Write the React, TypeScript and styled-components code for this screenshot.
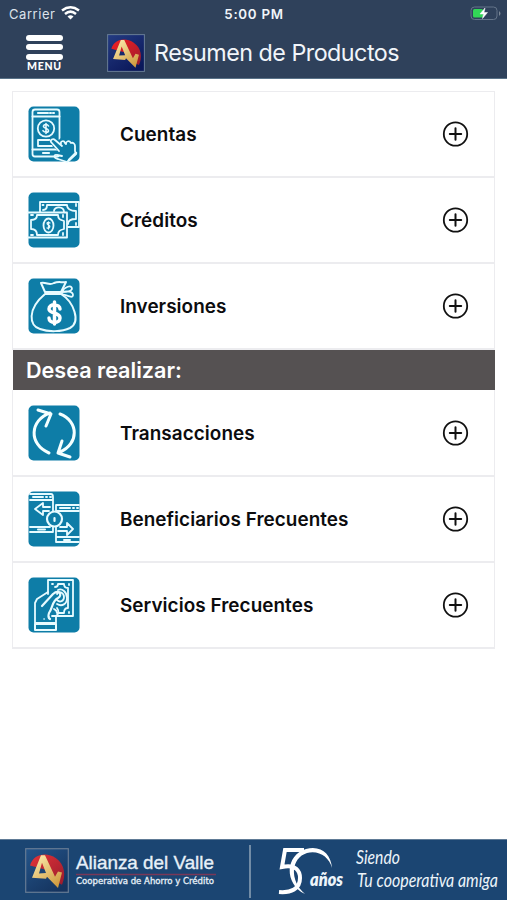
import React from "react";
import styled, { createGlobalStyle } from "styled-components";

const GlobalStyle = createGlobalStyle`
  * { box-sizing: border-box; }
  body { margin: 0; background: #fff; font-family: Inter, "Liberation Sans", sans-serif; }
  svg { display: block; flex: none; overflow: visible; }
`;

const Screen = styled.div`
  width: 507px;
  height: 900px;
  display: flex;
  flex-direction: column;
  background: #fff;
  overflow: hidden;
`;

const Header = styled.header`
  height: 79px;
  flex: none;
  background: #2f415b;
  border-bottom: 1px solid #597288;
  color: #f1f5fa;
`;

const StatusBar = styled.div`
  height: 27px;
  display: grid;
  grid-template-columns: 1fr auto 1fr;
  align-items: center;
  padding: 0 6px 0 7px;
`;

const Carrier = styled.div`
  display: flex;
  align-items: center;
  gap: 6px;
  padding-left: 2px;
  font-size: 13px;
  letter-spacing: 0.55px;
  color: #dce3eb;
`;

const Clock = styled.div`
  font-size: 13.3px;
  font-weight: 600;
  letter-spacing: 0.72px;
`;

const BatterySlot = styled.div`
  display: flex;
  justify-content: flex-end;
`;

const TitleBar = styled.div`
  height: 51px;
  display: flex;
  align-items: center;
  padding-left: 26px;
`;

const MenuButton = styled.button`
  width: 37px;
  height: 38px;
  padding: 0;
  margin: 2px 44px 0 0;
  border: 0;
  background: none;
  color: #fff;
  display: flex;
  flex-direction: column;
  align-items: center;
`;

const MenuBar = styled.span`
  flex: none;
  width: 37px;
  height: 6px;
  border-radius: 3px;
  background: #fff;
  margin-bottom: 3.5px;
`;

const MenuLabel = styled.span`
  font: 900 10.5px/10px Lato, sans-serif;
  letter-spacing: 0.7px;
  margin-top: -2px;
`;

const Title = styled.h1`
  margin: 0 0 0 9px;
  font-size: 23.3px;
  line-height: 30px;
  font-weight: 400;
  letter-spacing: -0.51px;
  white-space: nowrap;
`;

const List = styled.main`
  margin: 12px 12px 0 12px;
  flex: 1;
`;

const Row = styled.div`
  height: 86px;
  display: flex;
  align-items: center;
  padding: 0 25px 0 15px;
  border: 0 solid #ececef;
  border-width: 0 1px 2px 1px;
  &:first-child { height: 87px; border-top-width: 1px; }
  h2 + & { height: 87px; padding-top: 1px; }
`;

const RowLabel = styled.span`
  flex: 1;
  margin-left: 40px;
  font-size: 18.9px;
  font-weight: 600;
  letter-spacing: 0.06px;
  color: #0c0c0e;
  white-space: nowrap;
`;

const SectionTitle = styled.h2`
  margin: 0 0 0 1px;
  height: 40px;
  padding: 0 13px;
  background: #555152;
  color: #fff;
  font-size: 21.6px;
  line-height: 40px;
  font-weight: 600;
`;

const Footer = styled.footer`
  height: 61px;
  flex: none;
  display: flex;
  align-items: center;
  background: #1b4572;
  border-top: 1px solid #607b96;
  padding-left: 25px;
`;

const Divider = styled.span`
  width: 2px;
  height: 53px;
  margin: 2px 25px 0 29px;
  background: #728ca6;
`;

const Brand = styled.div`
  margin-left: 7px;
`;

const tileProps = {
  width: 52,
  height: 56,
  viewBox: "0 0 52 56",
  fill: "none",
  stroke: "#e7fbff",
  strokeWidth: 1.8,
  strokeLinejoin: "round" as const,
  strokeLinecap: "round" as const,
};

const Tile = () => <rect x=".5" y=".5" width="51" height="55" rx="5" fill="#0e7da7" stroke="none" />;

const AccountIcon = () => (
  <svg {...tileProps}>
    <Tile />
    <rect x="4.500" y="3.500" width="27" height="47" rx="2.500" />
    <path d="M4.500 10.500h27M4.500 43.500h27" strokeWidth="2" />
    <path d="M10 7h10M22 7h1M25 7h1M15 47h6" strokeWidth="2.2" />
    <circle cx="18" cy="22.500" r="8.200" />
    <path d="M20.500 20c-1-2-4.500-2-5 0-.5 2.500 5 2 5 4.700 0 2-4 2-5.500 0M18 17.500v10" strokeWidth="1.6" />
    <path d="M22 34H10v6h14" />
    <path
      d="M22 34c-1 2 0 3 1 4l8 8-4-1c-2 1-1 4 1 4l6 2 5 3 6-8 2-2-1-9c-1-2-3-3-5-2-1-2-4-2-5 0-2-2-4-1-5 1l-6-4c-1-1-3 0-3 4z"
      fill="#0e7da7"
      stroke="none"
    />
    <path d="m31 45-8-9c-1-2 2-4 4-2l7 6m-1-2c-1-3 3-4 4-1l1 1c0-3 3-4 5-1 2-1 4 1 4 3v5l1 3-9 8-9-3c-5-1-4-5-1-4l5 1" />
    <path d="m41 54 7-7" strokeWidth="2.500" />
  </svg>
);

const CreditIcon = () => (
  <svg {...tileProps}>
    <Tile />
    <path d="M12 20V10h39v25H40M0 20.500h39v25H0" />
    <path d="M15 18c3 0 4-2 4-5h20c0 4 4 6 9 6v8c-5 0-8 2-8 5M14.500 13h1M48 12v2M48 31v2" />
    <path d="M26 19c0-5 10-5 10 1" />
    <path d="M3 28c4 0 6-2 6-5h21c0 4 2 5 6 6v8c-4 1-6 2-6 6H9c0-4-2-6-6-6zM3 23h2M35 23v2M3 43h2M35 43v-2" />
    <ellipse cx="20.500" cy="33.500" rx="5" ry="7" />
    <path d="M22 31c-3-2-4 1-1.500 2s1 4-1.500 3M20.500 30v7" strokeWidth="1.3" />
  </svg>
);

const SavingsIcon = () => (
  <svg {...tileProps}>
    <Tile />
    <path d="M17 14 13 5c6-1 8 3 13 0 5-2 8 0 12-1l-5 10zM17 16C-1 31 1 48 12 51c8 3 22 3 30-1 11-6 4-26-9-34M17 16h17" strokeWidth="2" />
    <path d="M34 14c2-5 10-8 10-3-1 3-6 3-10 3zm0 0c4-1 11-1 11 3s-7 0-11-1" />
    <path d="M32 31c0-5-11-6-11 0 0 5 11 3 11 9s-11 6-11 0M26.500 24v22" stroke="#fff" strokeWidth="3.5" />
  </svg>
);

const TransferIcon = () => (
  <svg {...tileProps} stroke="#f4ffff" strokeWidth="3">
    <Tile />
    <path d="M21 48C0 39 2 15 22 8M10 5l13 4-5 12M32 9c19 7 19 30 0 38M34 36l-4 12 12 4" />
  </svg>
);

const BeneficiaryIcon = () => (
  <svg {...tileProps}>
    <Tile />
    <path d="M2 3h21q2 0 2 3v14M2 9h23M2 36h20M2 41h23v-6M28 22V14h23M28 20h23M28 35v16h23M28 46h23" />
    <path d="M5 6h10M18 6h1M22 6h1M10 38.500h7M32 17h10M45 17h1M49 17h1M36 49h6" strokeWidth="2" />
    <path d="M21 20h-6v4l-8-6 8-6v4h7M32 36h7v-4l6 6-6 6v-4h-9" />
    <circle cx="26.500" cy="28" r="7.500" fill="#0e7da7" strokeWidth="2.2" />
    <path d="M26.500 27v3" strokeWidth="2.2" />
  </svg>
);

const ServiceIcon = () => (
  <svg {...tileProps}>
    <Tile />
    <path d="M20 17V3h25v36H24M27 10c2 0 3-1 3-3h6c0 3 2 4 4 4v20c-3 0-4 2-4 5h-7c0-2-1-3-3-4M24 7h1M41 7v1M41 35v1" />
    <path d="m20 15-11 7-2 4v20h21v-7c3-2 3-5 1-8" />
    <path d="M14 29 25 17c6-5 10 1 5 4-6 3-5 9-9 15-1 3-1 5 1 6" strokeWidth="2.2" />
    <path d="M29 17c2-4 7-1 7 3s-4 6-7 3M30 13c4-2 9 2 9 8s-5 9-10 6" />
    <path d="M7 47v6h21v-6z" strokeWidth="2" />
    <path d="M16 42h.2M21 40h.2" strokeWidth="1.6" />
  </svg>
);

const PlusIcon = () => (
  <svg width="27" height="27" viewBox="0 0 27 27" fill="none" stroke="#111" strokeWidth="1.8" strokeLinecap="round">
    <circle cx="13.500" cy="13" r="11.700" />
    <path d="M7.800 13h11.400M13.500 7.300v11.400" strokeWidth="2" />
  </svg>
);

const AllianceMark = ({ width, height, id }: { width: number; height: number; id: string }) => (
  <svg width={width} height={height} viewBox="0 0 44 44" preserveAspectRatio="none">
    <defs>
      <linearGradient id={`${id}-blue`} x2=".7" y2="1">
        <stop stopColor={id === "top" ? "#243c83" : "#24558a"} />
        <stop offset="1" stopColor={id === "top" ? "#0b185a" : "#15345f"} />
      </linearGradient>
      <linearGradient id={`${id}-red`} x2="1" y2="1">
        <stop stopColor={id === "top" ? "#f51f22" : "#e33338"} />
        <stop offset="1" stopColor="#9a1c2d" />
      </linearGradient>
      <linearGradient id={`${id}-gold`} x2=".7" y2="1">
        <stop stopColor="#fff1b4" />
        <stop offset="1" stopColor="#d09d42" />
      </linearGradient>
    </defs>
    <rect x=".7" y=".7" width="42.600" height="42.600" fill={`url(#${id}-blue)`} stroke="#667b94" strokeWidth="1.2" />
    <path d="M5 17C9 5 22 4 31 10c9 6 10 17 6 26l-8-4-9-11z" fill={`url(#${id}-red)`} />
    <path
      d="M7 29 16 7h4l9 19 1 2 3-5 4 1-4 15-11-11-1 2zm7-4 7-.5-4-10z"
      fill={`url(#${id}-gold)`}
      fillRule="evenodd"
    />
  </svg>
);

const WifiIcon = () => (
  <svg width="19" height="15" viewBox="0 0 19 15" fill="none" stroke="#fff" strokeWidth="2.500">
    <path d="M1 4.500q8.500-6.400 17 0M4 8q5.500-4.700 11 0" />
    <path d="m6.500 10.500 3 3 3-3q-3-2.500-6 0z" fill="#fff" stroke="none" />
  </svg>
);

const BatteryIcon = () => (
  <svg width="31" height="15" viewBox="0 0 31 15">
    <rect x="1" y="1" width="26" height="12.500" rx="3.500" fill="none" stroke="#65758a" />
    <rect x="3" y="3" width="10" height="8.500" rx="1.500" fill="#32d657" />
    <path d="M29 5v5q3-2.500 0-5z" fill="#7c8997" />
    <path d="m15 2-5 6h3.500l-1 4.500 5-6H14z" fill="#fff" stroke="#fff" strokeWidth=".5" />
  </svg>
);

const BrandLockup = () => (
  <Brand>
    <svg width="144" height="48" viewBox="0 0 144 48" fill="#e7f0f8">
      <text x="0" y="23" fontFamily="Liberation Sans, sans-serif" fontSize="18.500" stroke="#e7f0f8" strokeWidth=".35" textLength="138" lengthAdjust="spacingAndGlyphs">
        Alianza del Valle
      </text>
      <path d="M0 28.500h140" stroke="#793858" strokeWidth="1.400" />
      <text x="0" y="38" fontFamily="DejaVu Sans, sans-serif" stroke="#e7f0f8" strokeWidth=".3" fontSize="8.500" textLength="138" lengthAdjust="spacingAndGlyphs">
        Cooperativa de Ahorro y Crédito
      </text>
    </svg>
  </Brand>
);

const AnniversaryMark = () => (
  <svg width="231" height="58" viewBox="0 0 231 58">
    <path d="M28 9H9L6 26c14-3 18 4 18 11 0 11-9 15-21 14" fill="none" stroke="#fff" strokeWidth="4" />
    <path d="M29 53C8 43 9 14 30 8c15-4 25 5 26 19-3-11-13-18-25-15-16 5-18 27-2 41z" fill="#fff" />
    <g fontFamily="Lato, sans-serif" fontStyle="italic" fill="#edf4fa">
      <text x="34" y="45" fontSize="18" fontWeight="800" textLength="33" lengthAdjust="spacingAndGlyphs">años</text>
      <text x="80" y="23" fontSize="20" fontWeight="400" textLength="44" lengthAdjust="spacingAndGlyphs">Siendo</text>
      <text x="81" y="46" fontSize="20" fontWeight="400" textLength="141" lengthAdjust="spacingAndGlyphs">Tu cooperativa amiga</text>
    </g>
  </svg>
);

const products = [
  { label: "Cuentas", Icon: AccountIcon },
  { label: "Créditos", Icon: CreditIcon },
  { label: "Inversiones", Icon: SavingsIcon },
];

const actions = [
  { label: "Transacciones", Icon: TransferIcon },
  { label: "Beneficiarios Frecuentes", Icon: BeneficiaryIcon },
  { label: "Servicios Frecuentes", Icon: ServiceIcon },
];

const renderRow = ({ label, Icon }: { label: string; Icon: React.ComponentType }) => (
  <Row key={label}>
    <Icon />
    <RowLabel>{label}</RowLabel>
    <PlusIcon />
  </Row>
);

export default function App() {
  return (
    <Screen>
      <GlobalStyle />
      <Header>
        <StatusBar>
          <Carrier>Carrier <WifiIcon /></Carrier>
          <Clock>5:00 PM</Clock>
          <BatterySlot><BatteryIcon /></BatterySlot>
        </StatusBar>
        <TitleBar>
          <MenuButton>
            <MenuBar /><MenuBar /><MenuBar />
            <MenuLabel>MENÚ</MenuLabel>
          </MenuButton>
          <AllianceMark id="top" width={38} height={38} />
          <Title>Resumen de Productos</Title>
        </TitleBar>
      </Header>
      <List>
        {products.map(renderRow)}
        <SectionTitle>Desea realizar:</SectionTitle>
        {actions.map(renderRow)}
      </List>
      <Footer>
        <AllianceMark id="bottom" width={44} height={45} />
        <BrandLockup />
        <Divider />
        <AnniversaryMark />
      </Footer>
    </Screen>
  );
}
